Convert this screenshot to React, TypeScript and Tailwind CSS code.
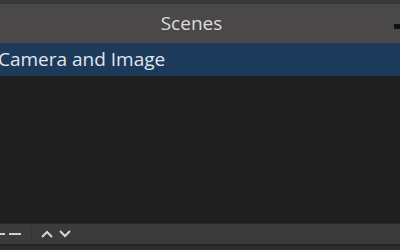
export default function App() {
  return (
    <div
      className="w-[400px] h-[250px] overflow-hidden flex flex-col bg-[#1e1e1e] text-[#e1e1e1]"
      style={{ fontFamily: '"Open Sans", "Noto Sans", sans-serif' }}
    >
      <div className="h-[4px] bg-[#3a3939] shrink-0" />
      <div className="h-[39px] shrink-0 bg-[#4a4848] relative flex items-center justify-center">
        <span className="text-[19px] leading-none text-[#dcdcdc] -ml-[17px]">Scenes</span>
        <div className="absolute right-0 top-[20px] w-[6px] h-[5px] bg-[#111]" />
      </div>
      <div className="h-[33px] shrink-0 bg-[#1c3a5a] flex items-center">
        <span className="text-[19px] leading-none -ml-[2px] text-[#e2e6ea] whitespace-nowrap">
          Camera and Image
        </span>
      </div>
      <div className="flex-1 bg-[#1f1f1f]" />
      <div className="h-px bg-[#2a2a2a] shrink-0" />
      <div className="h-[20px] shrink-0 bg-[#3b3b3b] flex items-center">
        <div className="flex items-center gap-[4px] -ml-[1px] w-[32px]">
          <span className="block w-[6px] h-[2px] bg-[#cfcfcf]" />
          <span className="block w-[12px] h-[2px] bg-[#cfcfcf]" />
        </div>
        <div className="w-px h-[14px] bg-[#333]" />
        <svg width="14" height="10" viewBox="0 0 14 10" className="ml-[8px]" fill="none" stroke="#d6d6d6" strokeWidth="2">
          <path d="M2 8 L7 3 L12 8" />
        </svg>
        <svg width="14" height="10" viewBox="0 0 14 10" className="ml-[4px]" fill="none" stroke="#d6d6d6" strokeWidth="2">
          <path d="M2 2 L7 7 L12 2" />
        </svg>
      </div>
      <div className="h-[2px] bg-[#242424] shrink-0" />
      <div className="h-[4px] bg-[#2e2e2e] shrink-0" />
    </div>
  );
}
